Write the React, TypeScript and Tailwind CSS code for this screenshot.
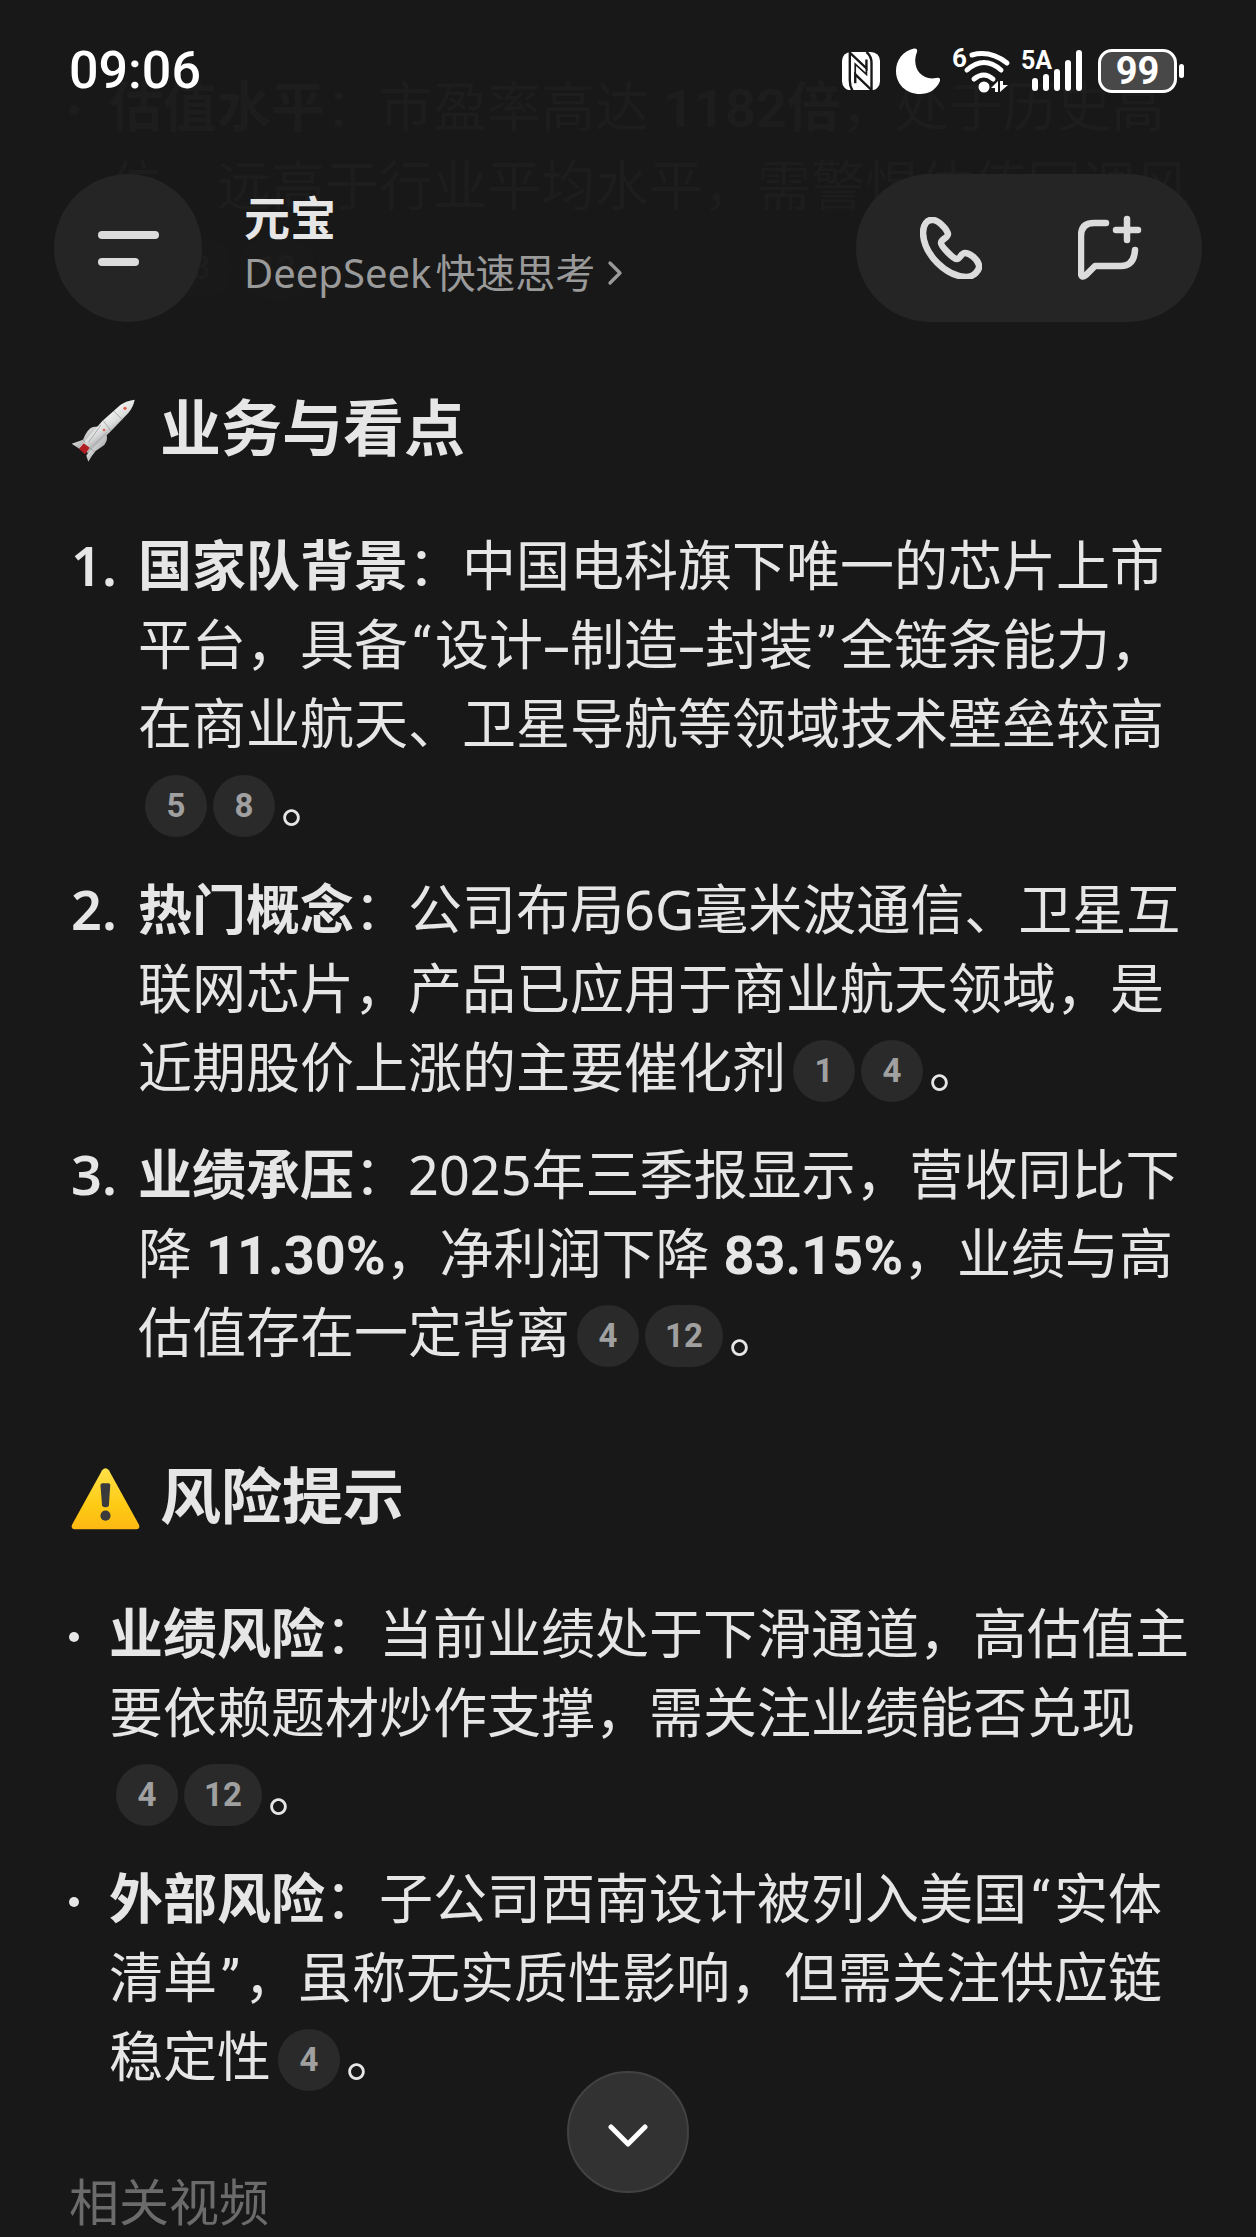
import type { ReactNode } from 'react';
import { ChevronRight } from 'lucide-react';

function Cite({ n, faded = false }: { n: number; faded?: boolean }) {
  return (
    <a
      href={`#ref-${n}`}
      className={`mr-1.5 inline-flex h-[62px] min-w-[62px] items-center justify-center rounded-full px-5 align-[6px] font-[Roboto] text-[33px] leading-none font-bold ${
        faded ? 'bg-[#191919] text-[#1d1d1d]' : 'bg-[#2a2a2a] text-[#a0a0a0]'
      }`}
    >
      {n}
    </a>
  );
}

function Cites({ ids, faded }: { ids: number[]; faded?: boolean }) {
  return (
    <span className="ml-[7px] whitespace-nowrap">
      {ids.map((n) => (
        <Cite key={n} n={n} faded={faded} />
      ))}
    </span>
  );
}

// Half-width quote marks, so that the text keeps its CJK grid
function Quoted({ children }: { children: ReactNode }) {
  return (
    <>
      <span className="inline-block w-[27px] text-center font-[Roboto] leading-none">“</span>
      {children}
      <span className="inline-block w-[27px] text-center font-[Roboto] leading-none">”</span>
    </>
  );
}

function Figure({ children }: { children: ReactNode }) {
  return <strong className="font-['Roboto','Noto_Sans_CJK_SC',sans-serif] leading-none">{children}</strong>;
}

function Numbered({ n, children }: { n: number; children: ReactNode }) {
  return (
    <li className="flex">
      <span className="w-[69px] shrink-0 pl-0.5 font-semibold">{n}.</span>
      <p className="min-w-0 flex-1">{children}</p>
    </li>
  );
}

function Bulleted({ faded = false, children }: { faded?: boolean; children: ReactNode }) {
  return (
    <li className={`flex ${faded ? 'text-[#1d1d1d]' : ''}`}>
      <span className="flex h-[79px] w-10 shrink-0 items-center pt-1.5">
        <span className={`size-2.5 rounded-full ${faded ? 'bg-[#1d1d1d]' : 'bg-[#e6e6e6]'}`} />
      </span>
      <p className="min-w-0 flex-1">{children}</p>
    </li>
  );
}

function SectionTitle({ icon, children }: { icon: ReactNode; children: ReactNode }) {
  return (
    <h2 className="mt-[82px] flex items-center gap-5 text-[61px] leading-[84px] font-bold">
      <span className="flex w-[71px] pt-1.5 pl-0.5">{icon}</span>
      {children}
    </h2>
  );
}

function Rocket() {
  return (
    <svg viewBox="0 0 192 190" className="w-16 shrink-0" aria-hidden="true">
      <defs>
        <linearGradient id="hull" x1="0.35" y1="0.3" x2="0.65" y2="0.7">
          <stop offset="0" stopColor="#f6f6f6" />
          <stop offset="0.5" stopColor="#dcdddd" />
          <stop offset="1" stopColor="#98999b" />
        </linearGradient>
        <linearGradient id="booster" x1="0.2" y1="0.2" x2="0.8" y2="0.8">
          <stop offset="0" stopColor="#f0f0f0" />
          <stop offset="1" stopColor="#98999b" />
        </linearGradient>
      </defs>
      <path d="M2 134 L36 122 Q50 88 66 84 L88 82 L40 144 L26 150 Z" fill="url(#booster)" />
      <path d="M52 188 L46 170 L58 150 L106 106 Q112 122 100 138 L74 156 Q62 170 52 188 Z" fill="url(#booster)" />
      <path d="M28 142 L94 66 L148 18 Q168 5 191 2 Q188 22 172 42 L118 98 L50 162 Z" fill="url(#hull)" />
      <path d="M24 150 L38 133 L56 146 L42 166 Z" fill="#b01d22" />
      <path d="M96 64 L120 96 M128 36 L154 62 M36 122 L44 132 M70 158 L58 148" stroke="#8b8c8e" strokeWidth="2" />
      <path d="M90 78 L52 130 M108 100 L68 138" stroke="#a5a6a8" strokeWidth="3" fill="none" />
      <circle cx="162" cy="28" r="5" fill="#e0604f" />
      <circle cx="99" cy="93" r="4" fill="#e0604f" />
    </svg>
  );
}

function Warning() {
  return (
    <svg viewBox="0 0 204 182" className="w-[69px] shrink-0" aria-hidden="true">
      <defs>
        <linearGradient id="sign" x1="0" y1="0" x2="0" y2="1">
          <stop offset="0" stopColor="#ffe14a" />
          <stop offset="0.6" stopColor="#fecb14" />
          <stop offset="1" stopColor="#fdb813" />
        </linearGradient>
      </defs>
      <path d="M92 7 Q102 -5 112 7 L201 168 Q205 181 193 181 H11 Q-1 181 3 168 Z" fill="url(#sign)" />
      <path d="M87 50 Q88 45 93 45 H111 Q116 45 116 50 L112 112 Q102 120 92 112 Z" fill="#3a3a3c" />
      <circle cx="102" cy="141" r="15" fill="#3a3a3c" />
    </svg>
  );
}

function StatusIcons() {
  return (
    <div className="flex items-center text-white">
      <svg viewBox="0 0 112 113" className="mr-4 w-[38px]" aria-hidden="true">
        <rect width="112" height="113" rx="26" fill="#fff" />
        <g fill="none" stroke="#181818" strokeWidth="7">
          <path d="M23 0 V84 Q23 102 31 113" />
          <path d="M23 2 L72 48 V22" />
          <path d="M72 0 Q87 12 87 32 V112" />
          <path d="M87 112 L39 66 V92" />
          <path d="M39 66 V36 L72 66 V48" strokeWidth="5" />
        </g>
      </svg>
      <svg viewBox="0 0 44 46" className="mr-3.5 w-11" aria-hidden="true">
        <path d="M18 0.500 Q22 0 21 4 C15 19 25 33 40 30 Q45 29 44 33 C40 42 33 46 24 46 C10 46 0 36 0 23 C0 12 7 3 18 0.500 Z" fill="#fff" />
      </svg>
      <svg viewBox="0 0 58 46" className="mr-3 w-[58px] overflow-visible" aria-hidden="true">
        <text x="-2" y="19" fontSize="26" fontWeight="700" fill="#fff" className="font-[Roboto]">6</text>
        <g fill="none" stroke="#fff" strokeWidth="5" strokeLinecap="round">
          <path d="M18 7 Q36 2 53 15" />
          <path d="M13 22 Q30 7 47 22" />
          <path d="M20 31 Q30 23 39 31" />
        </g>
        <circle cx="30" cy="39" r="5.500" fill="#fff" />
        <path d="M44 33 V44 H41 V40 H37 Z M46 44 V33 H49 V37 H54 Z" fill="#fff" />
      </svg>
      <svg viewBox="0 0 60 44" className="mr-3.5 w-[60px] overflow-visible" aria-hidden="true">
        <text x="-3" y="20" fontSize="25" fontWeight="700" fill="#fff" className="font-[Roboto]">5A</text>
        <g stroke="#fff" strokeWidth="6" strokeLinecap="round">
          <path d="M11 32 V39 M22 28 V39 M33 23 V39 M44 14 V39 M55 4 V39" />
        </g>
      </svg>
      <span className="flex h-11 w-[79px] items-center justify-center rounded-[14px] border-[3px] border-white bg-[#484848] font-[Roboto] text-[38px] leading-none font-bold">
        99
      </span>
      <span className="ml-0.5 h-3.5 w-[5px] rounded-sm bg-white" />
    </div>
  );
}

function PhoneIcon() {
  return (
    <svg viewBox="0 0 62 62" className="w-[62px]" fill="none" stroke="#dcdcdc" strokeWidth="6.500" strokeLinejoin="round" aria-hidden="true">
      <path d="M13 3 C7 2 3 8 3 16 C4 38 26 59 46 60 C54 60 60 53 59 48 C57 41 49 36 45 36 C41 36 40 42 37 42 C33 42 21 29 21 26 C21 22 28 21 28 17 C27 12 18 3 13 3 Z" />
    </svg>
  );
}

function NewChatIcon() {
  return (
    <svg viewBox="0 0 64 66" className="w-16" fill="none" stroke="#dcdcdc" strokeWidth="6.500" strokeLinecap="round" strokeLinejoin="round" aria-hidden="true">
      <path d="M28 8 H16 Q3 8 3 21 V58 Q3 64 8 60 L17 51 H43 Q56 51 57 35" />
      <path d="M49 4 V25 M38 15 H60" />
    </svg>
  );
}

export default function App() {
  return (
    <div className="relative min-h-screen overflow-hidden bg-[#181818] font-['Noto_Sans','Noto_Sans_CJK_SC',sans-serif] text-[#e6e6e6]" lang="zh-CN">
      <div className="absolute inset-x-0 top-0 z-10">
        <div className="flex h-[142px] items-center justify-between pr-[72px] pl-[69px]">
          <time className="font-[Roboto] text-[52px] leading-none font-medium text-white">09:06</time>
          <StatusIcons />
        </div>
        <header className="mt-8 flex items-center px-[54px]">
          <button type="button" aria-label="菜单" className="flex size-[148px] flex-col justify-center gap-[19px] rounded-full bg-[#252525] pl-11">
            <span className="h-2 w-[61px] rounded-full bg-[#dcdcdc]" />
            <span className="h-2 w-[41px] rounded-full bg-[#dcdcdc]" />
          </button>
          <div className="ml-[42px] flex-1 pb-1.5">
            <h1 className="text-[46px] leading-[56px] font-bold">元宝</h1>
            <button type="button" className="flex items-center text-[40px] leading-[56px] text-[#9a9a9a]">
              <span className="mr-1">DeepSeek</span>
              <span>快速思考</span>
              <ChevronRight className="size-10" strokeWidth={2} />
            </button>
          </div>
          <div className="flex h-[148px] w-[346px] items-center justify-between rounded-full bg-[#252525] pr-[60px] pl-16">
            <button type="button" aria-label="通话"><PhoneIcon /></button>
            <button type="button" aria-label="新对话"><NewChatIcon /></button>
          </div>
        </header>
      </div>

      <main className="pt-[67px] pr-16 pl-[69px] text-[54px] leading-[79px]">
        <ul>
          <Bulleted faded>
            <strong>估值水平</strong>：市盈率高达 <Figure>1182倍</Figure>，处于历史高位，远高于行业平均水平，需警惕估值回调风险
            <Cites ids={[8, 12]} faded />
          </Bulleted>
        </ul>

        <SectionTitle icon={<Rocket />}>业务与看点</SectionTitle>
        <ol className="mt-14 flex flex-col gap-7">
          <Numbered n={1}>
            <strong>国家队背景</strong>：中国电科旗下唯一的芯片上市平台，具备<Quoted>设计–制造–封装</Quoted>全链条能力，在商业航天、卫星导航等领域技术壁垒较高
            <Cites ids={[5, 8]} />。
          </Numbered>
          <Numbered n={2}>
            <strong>热门概念</strong>：公司布局6G毫米波通信、卫星互联网芯片，产品已应用于商业航天领域，是近期股价上涨的主要催化剂
            <Cites ids={[1, 4]} />。
          </Numbered>
          <Numbered n={3}>
            <strong>业绩承压</strong>：2025年三季报显示，营收同比下降 <Figure>11.30%</Figure>，净利润下降 <Figure>83.15%</Figure>，业绩与高估值存在一定背离
            <Cites ids={[4, 12]} />。
          </Numbered>
        </ol>

        <SectionTitle icon={<Warning />}>风险提示</SectionTitle>
        <ul className="mt-14 flex flex-col gap-7">
          <Bulleted>
            <strong>业绩风险</strong>：当前业绩处于下滑通道，高估值主要依赖题材炒作支撑，需关注业绩能否兑现
            <Cites ids={[4, 12]} />。
          </Bulleted>
          <Bulleted>
            <strong>外部风险</strong>：子公司西南设计被列入美国<Quoted>实体清单</Quoted>，虽称无实质性影响，但需关注供应链稳定性
            <Cites ids={[4]} />。
          </Bulleted>
        </ul>

        <p className="mt-[76px] text-[50px] leading-[60px] text-[#6b6b6b]">相关视频</p>
      </main>

      <div className="fixed inset-x-0 bottom-11 z-10 flex justify-center">
        <button type="button" aria-label="回到底部" className="flex size-[122px] items-center justify-center rounded-full border-2 border-[#424242] bg-[#323232]">
          <svg viewBox="0 0 40 24" className="mt-2 w-10" fill="none" stroke="#fff" strokeWidth="5" strokeLinecap="round" strokeLinejoin="round" aria-hidden="true">
            <path d="M3 3 L20 20 L37 3" />
          </svg>
        </button>
      </div>
    </div>
  );
}
